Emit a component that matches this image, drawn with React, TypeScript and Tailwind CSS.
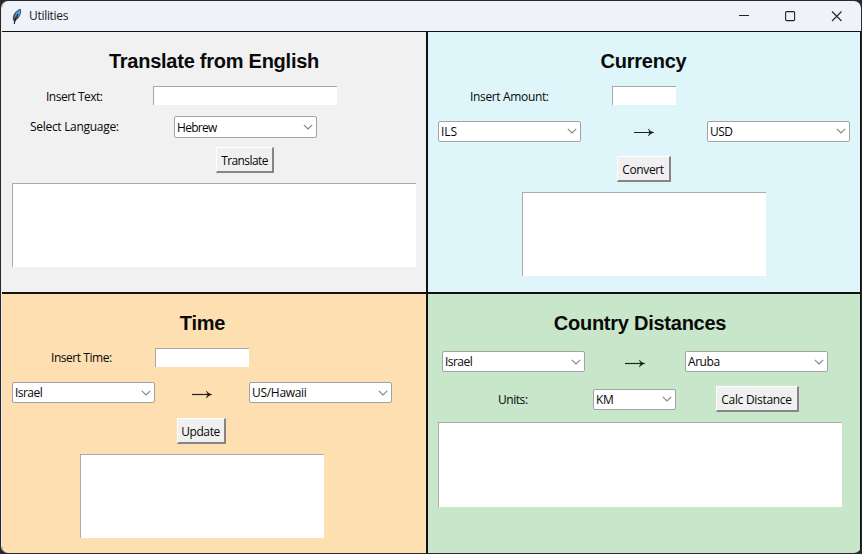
import type { ReactNode } from 'react';
import clsx from 'clsx';

function Heading({ children, className }: { children: ReactNode; className?: string }) {
  return (
    <h2 className={clsx("h-[24px] text-center font-['Liberation_Sans',Arial,sans-serif] text-[20px] font-bold tracking-[-0.25px] whitespace-nowrap text-[#0a0a0a]", className)}>
      {children}
    </h2>
  );
}

function Row({ children, className }: { children: ReactNode; className: string }) {
  return <div className={clsx('flex items-center', className)}>{children}</div>;
}

function Label({ children, className }: { children: ReactNode; className: string }) {
  return <label className={clsx('block leading-[16px] whitespace-nowrap', className)}>{children}</label>;
}

function Entry({ className }: { className: string }) {
  return <div className={clsx('border-t border-l border-[#a8a8a8] bg-white', className)} />;
}

function Output({ className }: { className: string }) {
  return <div className={clsx('border-t border-l border-[#acacac] bg-white', className)} />;
}

function Combo({ value, className, textClass }: { value: string; className?: string; textClass?: string }) {
  return (
    <div className={clsx('flex items-center justify-between rounded-[2px] border border-[#a3a3a3] bg-white pr-[3px] pl-[2px]', className ?? 'h-[21px] w-[143px]')}>
      <span className={clsx('pt-px leading-[16px] whitespace-nowrap', textClass ?? 'tracking-[-0.3px]')}>{value}</span>
      <svg width="10" height="6" viewBox="0 0 10 6" fill="none" stroke="#858585" strokeWidth="1.1">
        <path d="M0.8 0.8 5 4.9 9.2 0.8" />
      </svg>
    </div>
  );
}

function Button({ children, className }: { children: ReactNode; className: string }) {
  return (
    <button className={clsx('flex h-[26px] items-center justify-center border-t border-r-2 border-b-2 border-l border-t-white border-r-[#858585] border-b-[#858585] border-l-white bg-[#f0f0f0] pt-[2px] whitespace-nowrap', className)}>
      {children}
    </button>
  );
}

function Arrow({ className }: { className: string }) {
  return (
    <svg className={className} width="20" height="9" viewBox="0 0 20 9">
      <path d="M0 4.5H18" stroke="#222" strokeWidth="1.2" />
      <path d="M14.3 0.9C15.500 2.500 17.300 4 20 4.500C17.300 5 15.500 6.500 14.300 8.100L15.800 4.500Z" fill="#111" stroke="#111" strokeWidth="0.4" />
    </svg>
  );
}

function TitleBar() {
  return (
    <header className="flex h-[30px] items-center bg-[#eff3f9] pl-[9px]">
      <svg width="12" height="17" viewBox="0 0 12 17">
        <path d="M2.200 12.800C0.600 8.500 3.800 2.500 9.800 0.800C11.200 4.400 8.500 10.500 4.200 12.900Z" fill="#3d4b59" />
        <path d="M3.900 10.800C2.900 7.300 5.500 3.200 9.300 1.800C10 5.200 7.500 9.300 3.900 10.800Z" fill="#559bdc" />
        <path d="M7 6C5 8.500 4 11 3.200 15.800" stroke="#17202a" strokeWidth="1.100" fill="none" />
      </svg>
      <span className="ml-[6px] text-[12px] leading-[16px] tracking-[-0.3px] text-[#202020]">Utilities</span>
      <svg className="ml-auto" width="122" height="12" viewBox="0 0 122 12" fill="none" stroke="#222" strokeWidth="1.1">
        <path d="M0 5.500H10M93 1.500 102.500 11M102.500 1.500 93 11" />
        <rect x="46.600" y="1.600" width="9" height="9" rx="1" />
      </svg>
    </header>
  );
}

export default function App() {
  return (
    <div className="h-[554px] w-[862px] overflow-hidden bg-[#29292d] pt-px pl-[1px] font-['Open_Sans','Noto_Sans',sans-serif] text-[12px] text-[#080808]">
      <div className="h-[552px] w-[860px] overflow-hidden rounded-[7px] border-l border-l-[#ececec] bg-[#111]">
        <TitleBar />
        <main className="mt-px grid grid-cols-[424px_432px] grid-rows-[260px_259px] gap-[2px]">
          <section className="bg-[#f1f1f1]">
            <Heading className="mt-[18px] leading-[22px]">Translate from English</Heading>
            <Row className="mt-[12px] h-[19px] pl-[44px]">
              <Label className="w-[107px] pt-[2px] tracking-[-0.5px]">Insert Text:</Label>
              <Entry className="h-[19px] w-[184px]" />
            </Row>
            <Row className="mt-[11px] h-[22px] pl-[28px]">
              <Label className="w-[144px] tracking-[-0.3px]">Select Language:</Label>
              <Combo value="Hebrew" className="h-[22px] w-[143px]" textClass="tracking-[-0.7px]" />
            </Row>
            <Row className="mt-[9px] h-[26px] pl-[214px]">
              <Button className="w-[58px] tracking-[-0.6px]">Translate</Button>
            </Row>
            <Output className="mt-[10px] ml-[10px] h-[84px] w-[404px]" />
          </section>

          <section className="bg-[#def6f9]">
            <Heading className="mt-[18px] pr-px leading-[22px] tracking-[-0.1px]">Currency</Heading>
            <Row className="mt-[12px] h-[19px] pl-[42px]">
              <Label className="w-[142px] pt-[2px] tracking-[-0.35px]">Insert Amount:</Label>
              <Entry className="h-[19px] w-[64px]" />
            </Row>
            <Row className="mt-[15px] h-[22px] pl-[10px]">
              <Combo value="ILS" textClass="tracking-[0px]" />
              <Arrow className="mt-[3px] ml-[53px]" />
              <Combo value="USD" className="ml-[53px] h-[21px] w-[143px]" textClass="tracking-[-0.5px]" />
            </Row>
            <Row className="mt-[14px] h-[26px] pl-[189px]">
              <Button className="w-[54px] pr-px tracking-[-0.35px]">Convert</Button>
            </Row>
            <Output className="mt-[10px] ml-[94px] h-[84px] w-[244px]" />
          </section>

          <section className="bg-[#fedfb1]">
            <Heading className="mt-[17px] pr-[23px] leading-[24px]">Time</Heading>
            <Row className="mt-[13px] h-[19px] pl-[49px]">
              <Label className="w-[104px] tracking-[-0.45px]">Insert Time:</Label>
              <Entry className="h-[19px] w-[94px]" />
            </Row>
            <Row className="mt-[15px] h-[21px] pl-[10px]">
              <Combo value="Israel" textClass="tracking-[-0.55px]" />
              <Arrow className="mt-[4px] ml-[37px]" />
              <Combo value="US/Hawaii" className="ml-[37px] h-[21px] w-[143px]" />
            </Row>
            <Row className="mt-[15px] h-[26px] pl-[175px]">
              <Button className="w-[49px] pr-px tracking-[-0.4px]">Update</Button>
            </Row>
            <Output className="mt-[10px] ml-[78px] h-[84px] w-[244px]" />
          </section>

          <section className="bg-[#c8e6c9]">
            <Heading className="mt-[17px] pr-[8px] leading-[24px]">Country Distances</Heading>
            <Row className="mt-[16px] h-[21px] pl-[14px]">
              <Combo value="Israel" textClass="tracking-[-0.55px]" />
              <Arrow className="mt-[4px] ml-[40px]" />
              <Combo value="Aruba" className="ml-[40px] h-[21px] w-[143px]" textClass="tracking-[-0.45px]" />
            </Row>
            <Row className="mt-[14px] h-[26px] pl-[70px]">
              <Label className="w-[95px] pt-[2px] tracking-[-0.45px]">Units:</Label>
              <Combo value="KM" className="h-[21px] w-[83px]" />
              <Button className="ml-[40px] w-[83px] pr-px tracking-[-0.3px]">Calc Distance</Button>
            </Row>
            <Output className="mt-[10px] ml-[10px] h-[85px] w-[404px]" />
          </section>
        </main>
      </div>
    </div>
  );
}
